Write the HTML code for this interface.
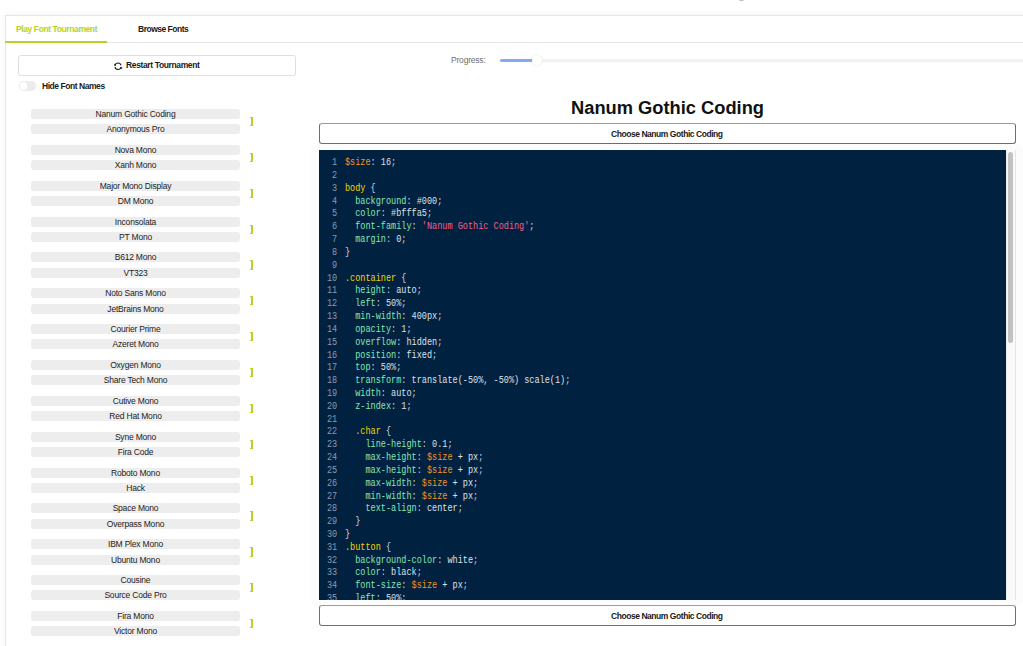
<!DOCTYPE html>
<html><head><meta charset="utf-8">
<style>
html,body{margin:0;padding:0;width:1023px;height:646px;overflow:hidden;background:#fff;}
body{position:relative;font-family:"Liberation Sans",sans-serif;}
.abs{position:absolute;}
.card{position:absolute;left:5px;top:15px;width:1100px;height:700px;border:1px solid #e6e6e6;background:#fff;box-shadow:0 0 8px rgba(0,0,0,0.045);box-sizing:border-box;}
.tabline{position:absolute;left:5px;top:42px;width:1100px;height:1px;background:#e6e6e6;}
.tabul{position:absolute;left:5px;top:41px;width:102px;height:1.5px;background:#b6d22a;}
.tab{position:absolute;font-size:8.5px;font-weight:700;white-space:nowrap;line-height:10px;}
.btn{position:absolute;box-sizing:border-box;background:#fff;}
.pill{position:absolute;left:31px;width:209px;height:10px;border-radius:3px;background:#ededed;color:#222;font-size:8.5px;line-height:11px;letter-spacing:-0.2px;text-align:center;white-space:nowrap;}
.brk{position:absolute;left:249.8px;width:1.6px;height:7.2px;border:1.6px solid #b6d22a;border-right-width:2px;border-left:none;border-radius:0 1px 1px 0;}
.code{position:absolute;left:319px;top:150px;width:687px;height:450px;background:#012140;overflow:hidden;}
.ln{position:absolute;left:0;height:0;width:680px;font-family:"Liberation Mono",monospace;font-size:10.5px;white-space:pre;line-height:12px;}
.ln span.num{position:absolute;top:-9px;color:#8a9bb0;transform:scaleX(0.8127);transform-origin:0 0;}
.ln span.src{position:absolute;left:26px;top:-9px;transform:scaleX(0.8127);transform-origin:0 0;}
.s{color:#f0961e}.y{color:#eed500}.g{color:#84e8b2}.w{color:#dce3eb}.p{color:#c9d3de}.k{color:#ef5f8c}
</style></head><body>
<div class="abs" style="left:738.5px;top:-2px;width:5.5px;height:3px;border-radius:50%;background:#b5b5b5;"></div>
<div class="card"></div>
<div class="tabline"></div>
<div class="tabul"></div>
<div class="tab" style="left:16px;top:24px;color:#b6d22a;letter-spacing:-0.4px">Play Font Tournament</div>
<div class="tab" style="left:138px;top:24px;color:#1a1a1a;letter-spacing:-0.5px">Browse Fonts</div>

<div class="btn" style="left:18px;top:55px;width:278px;height:21px;border:1px solid #dedede;border-radius:3px;"></div>
<svg class="abs" style="left:113px;top:60.5px" width="11" height="10" viewBox="0 0 11 10"><path d="M1.91 4.37 A3.2 3.2 0 0 1 8.09 4.37 M8.09 6.03 A3.2 3.2 0 0 1 1.87 5.87" fill="none" stroke="#1e1e1e" stroke-width="1.05"/><circle cx="2.1" cy="3.9" r="0.95" fill="#1e1e1e"/><circle cx="8.3" cy="6.9" r="0.95" fill="#1e1e1e"/></svg>
<div class="tab" style="left:126px;top:60px;color:#1a1a1a;letter-spacing:-0.37px">Restart Tournament</div>

<div class="abs" style="left:18.6px;top:80.6px;width:17.7px;height:10.4px;border-radius:5.2px;background:#ececec;box-shadow:0 0 1px rgba(0,0,0,0.06)"></div>
<div class="abs" style="left:19.7px;top:82px;width:7.6px;height:7.6px;border-radius:50%;background:#fff;"></div>
<div class="tab" style="left:42px;top:81px;color:#1a1a1a;letter-spacing:-0.45px">Hide Font Names</div>

<div class="pill" style="top:109.00px">Nanum Gothic Coding</div>
<div class="pill" style="top:124.20px">Anonymous Pro</div>
<div class="brk" style="top:117.00px"></div>
<div class="pill" style="top:144.86px">Nova Mono</div>
<div class="pill" style="top:160.06px">Xanh Mono</div>
<div class="brk" style="top:152.86px"></div>
<div class="pill" style="top:180.72px">Major Mono Display</div>
<div class="pill" style="top:195.92px">DM Mono</div>
<div class="brk" style="top:188.72px"></div>
<div class="pill" style="top:216.58px">Inconsolata</div>
<div class="pill" style="top:231.78px">PT Mono</div>
<div class="brk" style="top:224.58px"></div>
<div class="pill" style="top:252.44px">B612 Mono</div>
<div class="pill" style="top:267.64px">VT323</div>
<div class="brk" style="top:260.44px"></div>
<div class="pill" style="top:288.30px">Noto Sans Mono</div>
<div class="pill" style="top:303.50px">JetBrains Mono</div>
<div class="brk" style="top:296.30px"></div>
<div class="pill" style="top:324.16px">Courier Prime</div>
<div class="pill" style="top:339.36px">Azeret Mono</div>
<div class="brk" style="top:332.16px"></div>
<div class="pill" style="top:360.02px">Oxygen Mono</div>
<div class="pill" style="top:375.22px">Share Tech Mono</div>
<div class="brk" style="top:368.02px"></div>
<div class="pill" style="top:395.88px">Cutive Mono</div>
<div class="pill" style="top:411.08px">Red Hat Mono</div>
<div class="brk" style="top:403.88px"></div>
<div class="pill" style="top:431.74px">Syne Mono</div>
<div class="pill" style="top:446.94px">Fira Code</div>
<div class="brk" style="top:439.74px"></div>
<div class="pill" style="top:467.60px">Roboto Mono</div>
<div class="pill" style="top:482.80px">Hack</div>
<div class="brk" style="top:475.60px"></div>
<div class="pill" style="top:503.46px">Space Mono</div>
<div class="pill" style="top:518.66px">Overpass Mono</div>
<div class="brk" style="top:511.46px"></div>
<div class="pill" style="top:539.32px">IBM Plex Mono</div>
<div class="pill" style="top:554.52px">Ubuntu Mono</div>
<div class="brk" style="top:547.32px"></div>
<div class="pill" style="top:575.18px">Cousine</div>
<div class="pill" style="top:590.38px">Source Code Pro</div>
<div class="brk" style="top:583.18px"></div>
<div class="pill" style="top:611.04px">Fira Mono</div>
<div class="pill" style="top:626.24px">Victor Mono</div>
<div class="brk" style="top:619.04px"></div>


<div class="abs" style="left:451px;top:55px;font-size:8.5px;color:#6f6f6f;letter-spacing:-0.2px;white-space:nowrap;line-height:10px;">Progress:</div>
<div class="abs" style="left:500px;top:59.2px;width:600px;height:2.6px;background:#f2f2f2;border-radius:2px;"></div>
<div class="abs" style="left:500px;top:59px;width:34px;height:3px;background:#86a9f6;border-radius:2px;"></div>
<div class="abs" style="left:531.5px;top:55.2px;width:10.6px;height:10.6px;border-radius:50%;background:#fff;box-shadow:0 0 1.2px rgba(0,0,0,0.18)"></div>

<div class="abs" style="left:0;top:98px;width:1335px;text-align:center;font-size:18.3px;font-weight:700;color:#111;line-height:20px;white-space:nowrap">Nanum Gothic Coding</div>

<div class="btn" style="left:319px;top:123px;width:697px;height:21px;border:1px solid #6e6e6e;border-top-color:#9b9b9b;border-radius:3px;"></div>
<div class="tab" style="left:611px;top:128.6px;color:#1a1a1a;letter-spacing:-0.45px">Choose Nanum Gothic Coding</div>

<div class="abs" style="left:311px;top:145px;width:712px;height:460px;border-radius:6px;background:#fcfcfc;box-shadow:0 0 3px rgba(0,0,0,0.03);"></div>
<div class="code">
<div class="ln" style="top:15.20px"><span class="num" style="left:13.38px">1</span><span class="src"><span class="s">$size</span><span class="p">: </span><span class="w">16</span><span class="p">;</span></span></div>
<div class="ln" style="top:28.02px"><span class="num" style="left:13.38px">2</span><span class="src"></span></div>
<div class="ln" style="top:40.84px"><span class="num" style="left:13.38px">3</span><span class="src"><span class="y">body</span><span class="p"> {</span></span></div>
<div class="ln" style="top:53.66px"><span class="num" style="left:13.38px">4</span><span class="src"><span class="p">  </span><span class="g">background</span><span class="p">: </span><span class="w">#000</span><span class="p">;</span></span></div>
<div class="ln" style="top:66.48px"><span class="num" style="left:13.38px">5</span><span class="src"><span class="p">  </span><span class="g">color</span><span class="p">: </span><span class="w">#bfffa5</span><span class="p">;</span></span></div>
<div class="ln" style="top:79.30px"><span class="num" style="left:13.38px">6</span><span class="src"><span class="p">  </span><span class="g">font-family</span><span class="p">: </span><span class="k">&#x27;Nanum Gothic Coding&#x27;</span><span class="p">;</span></span></div>
<div class="ln" style="top:92.12px"><span class="num" style="left:13.38px">7</span><span class="src"><span class="p">  </span><span class="g">margin</span><span class="p">: </span><span class="w">0</span><span class="p">;</span></span></div>
<div class="ln" style="top:104.94px"><span class="num" style="left:13.38px">8</span><span class="src"><span class="p">}</span></span></div>
<div class="ln" style="top:117.76px"><span class="num" style="left:13.38px">9</span><span class="src"></span></div>
<div class="ln" style="top:130.58px"><span class="num" style="left:8.26px">10</span><span class="src"><span class="y">.container</span><span class="p"> {</span></span></div>
<div class="ln" style="top:143.40px"><span class="num" style="left:8.26px">11</span><span class="src"><span class="p">  </span><span class="g">height</span><span class="p">: </span><span class="w">auto</span><span class="p">;</span></span></div>
<div class="ln" style="top:156.22px"><span class="num" style="left:8.26px">12</span><span class="src"><span class="p">  </span><span class="g">left</span><span class="p">: </span><span class="w">50%</span><span class="p">;</span></span></div>
<div class="ln" style="top:169.04px"><span class="num" style="left:8.26px">13</span><span class="src"><span class="p">  </span><span class="g">min-width</span><span class="p">: </span><span class="w">400px</span><span class="p">;</span></span></div>
<div class="ln" style="top:181.86px"><span class="num" style="left:8.26px">14</span><span class="src"><span class="p">  </span><span class="g">opacity</span><span class="p">: </span><span class="w">1</span><span class="p">;</span></span></div>
<div class="ln" style="top:194.68px"><span class="num" style="left:8.26px">15</span><span class="src"><span class="p">  </span><span class="g">overflow</span><span class="p">: </span><span class="w">hidden</span><span class="p">;</span></span></div>
<div class="ln" style="top:207.50px"><span class="num" style="left:8.26px">16</span><span class="src"><span class="p">  </span><span class="g">position</span><span class="p">: </span><span class="w">fixed</span><span class="p">;</span></span></div>
<div class="ln" style="top:220.32px"><span class="num" style="left:8.26px">17</span><span class="src"><span class="p">  </span><span class="g">top</span><span class="p">: </span><span class="w">50%</span><span class="p">;</span></span></div>
<div class="ln" style="top:233.14px"><span class="num" style="left:8.26px">18</span><span class="src"><span class="p">  </span><span class="g">transform</span><span class="p">: </span><span class="w">translate(-50%, -50%) scale(1)</span><span class="p">;</span></span></div>
<div class="ln" style="top:245.96px"><span class="num" style="left:8.26px">19</span><span class="src"><span class="p">  </span><span class="g">width</span><span class="p">: </span><span class="w">auto</span><span class="p">;</span></span></div>
<div class="ln" style="top:258.78px"><span class="num" style="left:8.26px">20</span><span class="src"><span class="p">  </span><span class="g">z-index</span><span class="p">: </span><span class="w">1</span><span class="p">;</span></span></div>
<div class="ln" style="top:271.60px"><span class="num" style="left:8.26px">21</span><span class="src"></span></div>
<div class="ln" style="top:284.42px"><span class="num" style="left:8.26px">22</span><span class="src"><span class="p">  </span><span class="y">.char</span><span class="p"> {</span></span></div>
<div class="ln" style="top:297.24px"><span class="num" style="left:8.26px">23</span><span class="src"><span class="p">    </span><span class="g">line-height</span><span class="p">: </span><span class="w">0.1</span><span class="p">;</span></span></div>
<div class="ln" style="top:310.06px"><span class="num" style="left:8.26px">24</span><span class="src"><span class="p">    </span><span class="g">max-height</span><span class="p">: </span><span class="s">$size</span><span class="w"> + px</span><span class="p">;</span></span></div>
<div class="ln" style="top:322.88px"><span class="num" style="left:8.26px">25</span><span class="src"><span class="p">    </span><span class="g">max-height</span><span class="p">: </span><span class="s">$size</span><span class="w"> + px</span><span class="p">;</span></span></div>
<div class="ln" style="top:335.70px"><span class="num" style="left:8.26px">26</span><span class="src"><span class="p">    </span><span class="g">max-width</span><span class="p">: </span><span class="s">$size</span><span class="w"> + px</span><span class="p">;</span></span></div>
<div class="ln" style="top:348.52px"><span class="num" style="left:8.26px">27</span><span class="src"><span class="p">    </span><span class="g">min-width</span><span class="p">: </span><span class="s">$size</span><span class="w"> + px</span><span class="p">;</span></span></div>
<div class="ln" style="top:361.34px"><span class="num" style="left:8.26px">28</span><span class="src"><span class="p">    </span><span class="g">text-align</span><span class="p">: </span><span class="w">center</span><span class="p">;</span></span></div>
<div class="ln" style="top:374.16px"><span class="num" style="left:8.26px">29</span><span class="src"><span class="p">  }</span></span></div>
<div class="ln" style="top:386.98px"><span class="num" style="left:8.26px">30</span><span class="src"><span class="p">}</span></span></div>
<div class="ln" style="top:399.80px"><span class="num" style="left:8.26px">31</span><span class="src"><span class="y">.button</span><span class="p"> {</span></span></div>
<div class="ln" style="top:412.62px"><span class="num" style="left:8.26px">32</span><span class="src"><span class="p">  </span><span class="g">background-color</span><span class="p">: </span><span class="w">white</span><span class="p">;</span></span></div>
<div class="ln" style="top:425.44px"><span class="num" style="left:8.26px">33</span><span class="src"><span class="p">  </span><span class="g">color</span><span class="p">: </span><span class="w">black</span><span class="p">;</span></span></div>
<div class="ln" style="top:438.26px"><span class="num" style="left:8.26px">34</span><span class="src"><span class="p">  </span><span class="g">font-size</span><span class="p">: </span><span class="s">$size</span><span class="w"> + px</span><span class="p">;</span></span></div>
<div class="ln" style="top:451.08px"><span class="num" style="left:8.26px">35</span><span class="src"><span class="p">  </span><span class="g">left</span><span class="p">: </span><span class="w">50%</span><span class="p">;</span></span></div>
<div class="ln" style="top:463.90px"><span class="num" style="left:8.26px">36</span><span class="src"><span class="p">  </span><span class="g">position</span><span class="p">: </span><span class="w">fixed</span><span class="p">;</span></span></div>

</div>
<div class="abs" style="left:1006px;top:150px;width:10px;height:450px;background:#fafafa;border-left:1px solid #eee;border-right:1px solid #e5e5e5;box-sizing:border-box"></div>
<div class="abs" style="left:1008px;top:152px;width:5px;height:191px;border-radius:3px;background:#c2c2c2;"></div>

<div class="btn" style="left:319px;top:605px;width:697px;height:21px;border:1px solid #6e6e6e;border-top-color:#9b9b9b;border-radius:3px;"></div>
<div class="tab" style="left:611px;top:610.6px;color:#1a1a1a;letter-spacing:-0.45px">Choose Nanum Gothic Coding</div>
</body></html>
